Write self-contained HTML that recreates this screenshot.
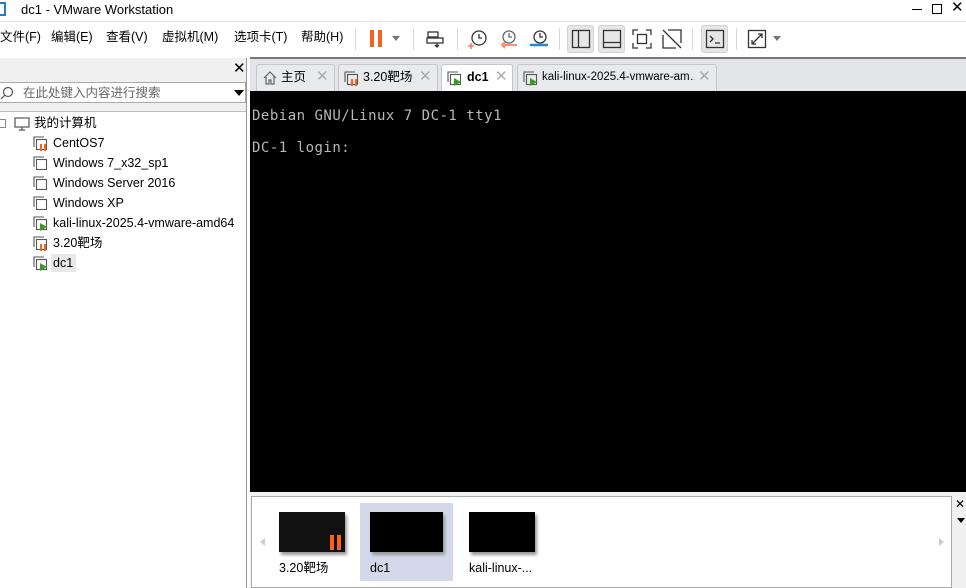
<!DOCTYPE html>
<html><head><meta charset="utf-8"><style>
*{margin:0;padding:0;box-sizing:border-box}
body{width:966px;height:588px;position:relative;overflow:hidden;background:#fff;font-family:"Liberation Sans","Noto Sans CJK SC",sans-serif;font-size:12px;color:#000;line-height:16px}
.a{position:absolute}
.menu span{position:absolute;top:29px;font-size:12.5px;line-height:16px}
.sep{position:absolute;top:28px;width:1px;height:22px;background:#d8d8d8}
.btn{position:absolute;top:25px;width:27px;height:28px;background:#e6e6e6;border:1px solid #d2d2d2;border-radius:3px}
.tab{position:absolute;top:64px;height:27px;background:#e9eaed;border:1px solid #c6c6c6;border-bottom:none;border-radius:3px 3px 0 0;font-size:12.5px}
.tab .t{position:absolute;top:4px;line-height:16px;white-space:nowrap;overflow:hidden}
.tab .x{position:absolute;top:3px;color:#aaa;font-size:15px;line-height:18px}
.tree div{position:absolute;left:53px;font-size:12.5px;color:#000;line-height:16px}
.term{position:absolute;left:252px;font-family:"DejaVu Sans Mono","Liberation Mono",monospace;font-size:14px;color:#b8b8b8;letter-spacing:0.5px;line-height:18px}
</style></head><body>
<div class="a" style="left:0;top:2px;width:6px;height:14px;border:2px solid #1e7fd1;border-left:none"></div>
<div class="a" style="left:21px;top:2px;font-size:13px">dc1 - VMware Workstation</div>
<div class="a" style="left:912px;top:9px;width:10px;height:1px;background:#000"></div>
<div class="a" style="left:932px;top:4px;width:10px;height:10px;border:1px solid #000"></div>
<div class="a" style="left:951px;top:0px;font-size:15px">✕</div>
<div class="a" style="left:0;top:21px;width:966px;height:1px;background:#e6e6e6"></div>
<div class="menu"><span style="left:0">文件(F)</span><span style="left:51px">编辑(E)</span><span style="left:106px">查看(V)</span><span style="left:162px">虚拟机(M)</span><span style="left:234px">选项卡(T)</span><span style="left:301px">帮助(H)</span></div>
<div class="sep" style="left:355px"></div>
<div class="a" style="left:370px;top:30px;width:4px;height:17px;background:#f7631b"></div>
<div class="a" style="left:378px;top:30px;width:4px;height:17px;background:#f7631b"></div>
<div class="a" style="left:392px;top:36px;border:4px solid transparent;border-top:5px solid #777"></div>
<div class="sep" style="left:413px"></div>
<svg class="a" style="left:426px;top:30px" width="18" height="18" fill="none" stroke="#333" stroke-width="1.3"><rect x="2" y="2" width="10" height="5"/><rect x="1" y="8" width="16" height="5"/><path d="M11 13v4M9 15l2 2 2-2"/></svg>
<div class="sep" style="left:457px"></div>
<svg class="a" style="left:468px;top:29px" width="20" height="20" fill="none" stroke="#333" stroke-width="1.3"><circle cx="11" cy="9" r="7"/><path d="M11 5v4h3"/><path d="M3 14v6M0 17h6" stroke="#f07050"/></svg>
<svg class="a" style="left:498px;top:29px" width="22" height="20" fill="none" stroke-width="1.3"><circle cx="11" cy="8" r="6" stroke="#666"/><path d="M11 4v4h3" stroke="#666"/><path d="M19 16H4M7 13l-3 3 3 3" stroke="#f7906b" stroke-width="2"/></svg>
<svg class="a" style="left:528px;top:29px" width="22" height="20" fill="none" stroke-width="1.3"><circle cx="12" cy="8" r="6" stroke="#333"/><path d="M12 4v4h3" stroke="#333"/><path d="M2 16h18" stroke="#1e8ad8" stroke-width="2.5"/></svg>
<div class="sep" style="left:559px"></div>
<div class="btn" style="left:567px"></div>
<svg class="a" style="left:571px;top:29px" width="20" height="20" fill="none" stroke="#333" stroke-width="1.3"><rect x="1.5" y="1.5" width="17" height="17"/><path d="M7.5 1.5v17"/></svg>
<div class="btn" style="left:598px"></div>
<svg class="a" style="left:602px;top:29px" width="20" height="20" fill="none" stroke="#333" stroke-width="1.3"><rect x="1.5" y="1.5" width="17" height="17"/><path d="M1.5 13.5h17"/></svg>
<svg class="a" style="left:632px;top:29px" width="20" height="20" fill="none" stroke="#333" stroke-width="1.3"><path d="M1 6V1h5M14 1h5v5M19 14v5h-5M6 19H1v-5"/><rect x="5.5" y="5.5" width="9" height="9"/></svg>
<svg class="a" style="left:662px;top:29px" width="20" height="20" fill="none" stroke="#333" stroke-width="1.3"><path d="M6 1h13v13M1 6v13h13M1 1l18 18"/></svg>
<div class="sep" style="left:692px"></div>
<div class="btn" style="left:701px"></div>
<svg class="a" style="left:705px;top:29px" width="20" height="20" fill="none" stroke="#333" stroke-width="1.3"><rect x="1.5" y="1.5" width="17" height="17"/><path d="M5 7l3 3-3 3M10 14h5"/></svg>
<div class="sep" style="left:736px"></div>
<svg class="a" style="left:747px;top:29px" width="20" height="20" fill="none" stroke="#333" stroke-width="1.3"><rect x="1.5" y="1.5" width="17" height="17"/><path d="M5 15l10-10M11 5h4v4M5 11v4h4"/></svg>
<div class="a" style="left:773px;top:36px;border:4px solid transparent;border-top:5px solid #777"></div>
<div class="a" style="left:250px;top:57px;width:716px;height:2px;background:#777"></div>
<div class="a" style="left:0;top:58px;width:247px;height:530px;background:#f0f0f0;border-right:1px solid #999"></div>
<div class="a" style="left:233px;top:60px;font-size:15px;line-height:18px">✕</div>
<div class="a" style="left:0;top:82px;width:246px;height:21px;background:#fff;border:1px solid #aaa;border-left:none"></div>
<svg class="a" style="left:0;top:86px" width="14" height="14" fill="none" stroke="#555" stroke-width="1.2"><circle cx="8" cy="6" r="4.5"/><path d="M5 9l-4 4"/></svg>
<div class="a" style="left:23px;top:85px;font-size:12.5px;color:#666">在此处键入内容进行搜索</div>
<div class="a" style="left:234px;top:90px;border:5px solid transparent;border-top:6px solid #000"></div>
<div class="a" style="left:0;top:111px;width:246px;height:477px;background:#fff;border-top:1px solid #bbb"></div>
<div class="tree">
<div class="a" style="left:0;top:119px;width:6px;height:9px;border:1px solid #888;border-left:none"></div>
<svg class="a" style="left:14px;top:117px" width="16" height="14" fill="none" stroke="#555" stroke-width="1.2"><rect x="1" y="1" width="14" height="9"/><path d="M5 13h6M8 10v3"/></svg>
<div style="left:34px;top:115px">我的计算机</div>
<div style="top:135px">CentOS7</div>
<div style="top:155px">Windows 7_x32_sp1</div>
<div style="top:175px">Windows Server 2016</div>
<div style="top:195px">Windows XP</div>
<div style="top:215px">kali-linux-2025.4-vmware-amd64</div>
<div style="top:235px">3.20靶场</div>
<div style="left:51px;top:254px;width:25px;height:18px;background:#e8e8e8"></div>
<div style="top:255px">dc1</div>
</div>
<svg class="a" style="left:33px;top:136px" width="16" height="140" fill="none" stroke="#555" stroke-width="1.1">
<g id="i"><path d="M1 11V1h10"/><rect x="3.5" y="3.5" width="10" height="10" fill="#fff"/></g>
<use href="#i" y="20"/><use href="#i" y="40"/><use href="#i" y="60"/><use href="#i" y="80"/><use href="#i" y="100"/><use href="#i" y="120"/>
<path d="M8 8v7M12 8v7" stroke="#f7631b" stroke-width="2"/>
<path d="M8 108v7M12 108v7" stroke="#f7631b" stroke-width="2"/>
<path d="M7 87l7 4-7 4z" fill="#3c9a1e" stroke="none"/>
<path d="M7 127l7 4-7 4z" fill="#3c9a1e" stroke="none"/>
</svg>
<div class="a" style="left:250px;top:59px;width:716px;height:32px;background:#e4e5e8"></div>
<div class="tab" style="left:256px;width:79px"><svg class="a" style="left:6px;top:6px" width="14" height="14" fill="none" stroke="#666" stroke-width="1.2"><path d="M1 7l6-6 6 6M3 5v8h3V9h2v4h3V5"/></svg><span class="t" style="left:24px">主页</span><span class="x" style="left:59px">✕</span></div>
<div class="tab" style="left:338px;width:100px"><svg class="a" style="left:5px;top:6px" width="16" height="16" fill="none" stroke="#555" stroke-width="1.1"><path d="M1 11V1h10"/><rect x="3.5" y="3.5" width="10" height="10"/><path d="M8 8v7M12 8v7" stroke="#f7631b" stroke-width="2"/></svg><span class="t" style="left:24px">3.20靶场</span><span class="x" style="left:80px">✕</span></div>
<div class="tab" style="left:441px;width:72px;background:#fff;height:28px"><svg class="a" style="left:5px;top:6px" width="16" height="16" fill="none" stroke="#555" stroke-width="1.1"><path d="M1 11V1h10"/><rect x="3.5" y="3.5" width="10" height="10"/><path d="M7 7l7 4-7 4z" fill="#3c9a1e" stroke="none"/></svg><span class="t" style="left:25px;font-weight:bold">dc1</span><span class="x" style="left:53px">✕</span></div>
<div class="tab" style="left:517px;width:200px"><svg class="a" style="left:5px;top:6px" width="16" height="16" fill="none" stroke="#555" stroke-width="1.1"><path d="M1 11V1h10"/><rect x="3.5" y="3.5" width="10" height="10"/><path d="M7 7l7 4-7 4z" fill="#3c9a1e" stroke="none"/></svg><span class="t" style="left:24px;font-size:11.5px;width:153px">kali-linux-2025.4-vmware-am…</span><span class="x" style="left:180px">✕</span></div>
<div class="a" style="left:250px;top:91px;width:716px;height:401px;background:#000"></div>
<div class="term" style="top:107px">Debian GNU/Linux 7 DC-1 tty1</div>
<div class="term" style="top:139px">DC-1 login:</div>
<div class="a" style="left:250px;top:492px;width:716px;height:96px;background:#f0f0f0"></div>
<div class="a" style="left:251px;top:496px;width:701px;height:92px;background:#fff;border:1px solid #aaa"></div>
<div class="a" style="left:955px;top:496px;font-size:12px">✕</div>
<div class="a" style="left:957px;top:518px;border:4px solid transparent;border-top:5px solid #000"></div>
<div class="a" style="left:256px;top:538px;border:4px solid transparent;border-right:5px solid #ccc"></div>
<div class="a" style="left:939px;top:538px;border:4px solid transparent;border-left:5px solid #ccc"></div>
<div class="a" style="left:360px;top:503px;width:93px;height:78px;background:#d3d9ea"></div>
<div class="a" style="left:279px;top:512px;width:66px;height:40px;background:#111;box-shadow:2px 3px 3px #999"></div>
<div class="a" style="left:330px;top:535px;width:4px;height:15px;background:#f7631b"></div>
<div class="a" style="left:337px;top:535px;width:4px;height:15px;background:#f7631b"></div>
<div class="a" style="left:370px;top:512px;width:73px;height:40px;background:#000;box-shadow:2px 3px 3px #999"></div>
<div class="a" style="left:469px;top:512px;width:66px;height:40px;background:#000;box-shadow:2px 3px 3px #999"></div>
<div class="a" style="left:279px;top:560px;font-size:12.5px">3.20靶场</div>
<div class="a" style="left:370px;top:560px;font-size:12.5px">dc1</div>
<div class="a" style="left:469px;top:560px;font-size:12.5px">kali-linux-...</div>
</body></html>
